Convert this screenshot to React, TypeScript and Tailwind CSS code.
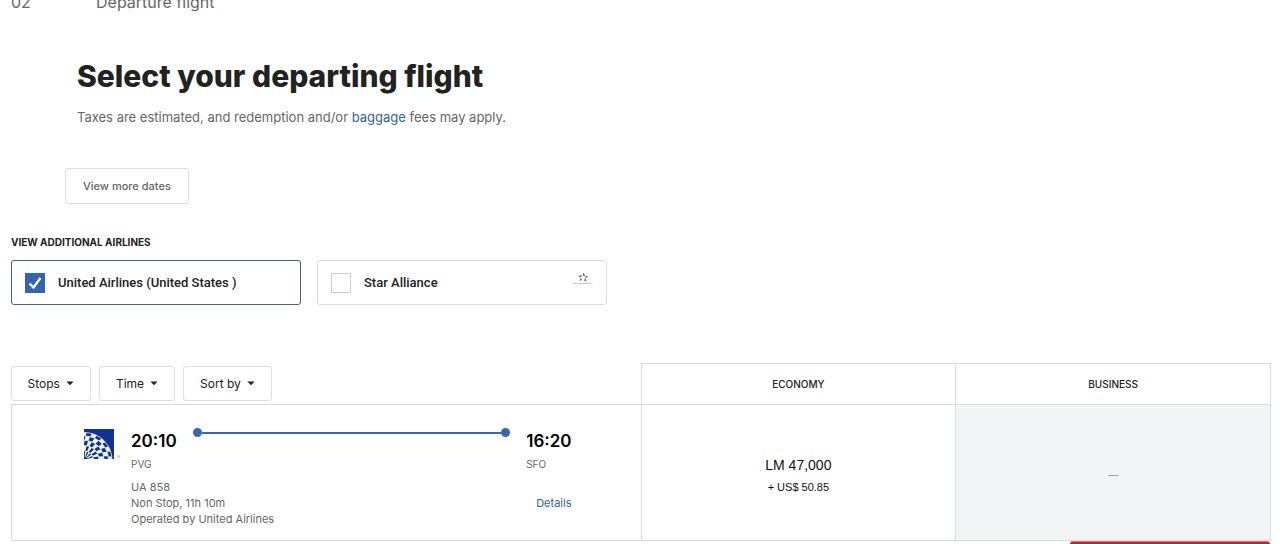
import { useState } from "react";

const filters = ["Stops", "Time", "Sort by"];

function Caret() {
  return (
    <svg viewBox="0 0 8 5" className="h-[5px] w-2" aria-hidden="true">
      <path d="M0.4 0.5h7.2L4 4.3z" fill="#222" />
    </svg>
  );
}

// Radii of the globe's rings and the number of tiles along each quarter turn.
const rings = [3, 9, 14.5, 19.5, 24, 27.5];
const sectors = 8;

function globePoint(radius: number, step: number) {
  const angle = (step / sectors) * (Math.PI / 2) + radius * 0.01;
  return `${(0.5 + radius * Math.sin(angle)).toFixed(2)} ${(31 - radius * Math.cos(angle)).toFixed(2)}`;
}

const globeTiles = rings.slice(0, -1).flatMap((inner, i) =>
  Array.from({ length: sectors + 3 }, (_, j) => j - 2)
    .filter((j) => (i + j) % 2 === 0)
    .map((j) => {
      const outer = rings[i + 1];
      return `M${globePoint(inner, j)}L${globePoint(outer, j)}L${globePoint(outer, j + 1)}L${globePoint(inner, j + 1)}z`;
    }),
);

function GlobeLogo() {
  return (
    <svg viewBox="0 0 36 30" className="h-[30px] w-9" role="img" aria-label="United">
      <defs>
        <clipPath id="logo-tile">
          <rect width="30" height="30" />
        </clipPath>
      </defs>
      <rect width="30" height="30" fill="#12348f" />
      <g clipPath="url(#logo-tile)">
        <path d={globeTiles.join("")} fill="#f4f8fd" />
        <g fill="none" stroke="#dfe8f6" strokeWidth="0.8">
          {rings.slice(1).map((radius) => (
            <circle key={radius} cx="0.5" cy="31" r={radius} />
          ))}
        </g>
      </g>
      <circle cx="34.5" cy="27.5" r="1" fill="none" stroke="#7f9ccc" strokeWidth="0.6" />
    </svg>
  );
}

function StarAllianceLogo() {
  return (
    <svg viewBox="0 0 20 14" className="h-[14px] w-5" role="img" aria-label="Star Alliance">
      <g fill="#6b6b6b">
        <path d="M10.6 0.6l1.7 3.7-2.9-.7z" />
        <path d="M15.3 3.8l-2.7 3-.7-2.4z" />
        <path d="M13.6 9.8l-3.3-1.9 2.3-1.1z" />
        <path d="M6.8 9.6l.4-3.7 1.8 1.7z" />
        <path d="M5 3.8l4-.6-1.4 2.3z" />
      </g>
      <path d="M0.5 11.5h19" stroke="#bbb" strokeWidth="1" strokeDasharray="2.4 .6" />
    </svg>
  );
}

type AirlineProps = {
  label: string;
  checked: boolean;
  onChange: (value: boolean) => void;
  logo?: boolean;
};

function AirlineOption({ label, checked, onChange, logo }: AirlineProps) {
  return (
    <label
      className={
        "flex h-[45px] w-[290px] items-center rounded-[3px] border px-[13px] font-['Roboto','Liberation_Sans',sans-serif] text-[13px] font-medium text-[#222] " +
        (checked ? "border-[#3f6486]" : "border-[#dcdcdc]")
      }
    >
      <span className="grid">
        <input
          type="checkbox"
          checked={checked}
          onChange={(e) => onChange(e.target.checked)}
          className="col-start-1 row-start-1 size-5 appearance-none border border-[#cccccc] bg-white checked:border-[#3563b0] checked:bg-[#3563b0]"
        />
        {checked && (
          <svg viewBox="0 0 20 20" className="pointer-events-none col-start-1 row-start-1 size-5" aria-hidden="true">
            <path d="M4.5 10.5l4 4L15.5 5" fill="none" stroke="#fff" strokeWidth="2.4" />
          </svg>
        )}
      </span>
      <span className="ml-[13px]">{label}</span>
      {logo && (
        <span className="mb-2 ml-auto">
          <StarAllianceLogo />
        </span>
      )}
    </label>
  );
}

export default function App() {
  const [united, setUnited] = useState(true);
  const [star, setStar] = useState(false);

  return (
    <div className="h-screen overflow-hidden bg-white font-['Inter','Liberation_Sans',sans-serif] text-[#222]">
      <main className="pr-[9px] pl-[11px]">
        <div className="-mt-[10px] flex h-6 items-center text-[16px] text-[#666]">
          <span className="w-[85px]">02</span>
          <span>Departure flight</span>
        </div>

        <header className="mt-[42px] ml-[66px]">
          <h1 className="text-[30px] leading-10 font-extrabold">Select your departing flight</h1>
          <p className="mt-[11px] text-[13px] leading-5 text-[#666]">
            Taxes are estimated, and redemption and/or{" "}
            <a href="#baggage" className="text-[#2f649c]">baggage</a> fees may apply.
          </p>
        </header>

        <button type="button" className="mt-[41px] ml-[54px] block h-9 rounded-[3px] border border-[#dedede] px-[17px] text-[11px] font-medium text-[#666]">
          View more dates
        </button>

        <fieldset className="mt-[30px]">
          <legend className="text-[10px] leading-4 font-bold">VIEW ADDITIONAL AIRLINES</legend>
          <div className="mt-[10px] flex gap-4">
            <AirlineOption label="United Airlines (United States )" checked={united} onChange={setUnited} />
            <AirlineOption label="Star Alliance" checked={star} onChange={setStar} logo />
          </div>
        </fieldset>

        <table className="mt-[58px] w-full table-fixed border-collapse">
          <thead>
            <tr className="h-[41px]">
              <td className="w-1/2 p-0 align-middle">
                <div className="-ml-px flex gap-2">
                  {filters.map((name) => (
                    <button key={name} type="button" className="flex h-[35px] items-center gap-[6px] rounded-[3px] border border-[#dedede] px-4 text-[12px]">
                      {name}
                      <Caret />
                    </button>
                  ))}
                </div>
              </td>
              <th scope="col" className="w-1/4 border border-[#d9dcdd] text-[10px] font-medium">ECONOMY</th>
              <th scope="col" className="w-1/4 border border-[#d9dcdd] text-[10px] font-medium">BUSINESS</th>
            </tr>
          </thead>
          <tbody>
            <tr className="h-[136px]">
              <td className="border border-[#d9dcdd] py-0 pr-[69px] pl-[72px] align-top">
                <div className="flex pt-6">
                  <GlobeLogo />
                  <div className="ml-[11px] flex-1">
                    <div className="flex">
                      <div className="w-[62px]">
                        <p className="text-[17px] leading-6 font-semibold text-black">20:10</p>
                        <p className="mt-[3px] text-[10px] leading-4 text-[#666]">PVG</p>
                      </div>
                      <div className="mt-[-1px] flex h-[9px] flex-1 items-center">
                        <span className="size-[9px] rounded-full bg-[#3a66ad]" />
                        <span className="h-[2px] flex-1 bg-[#3a66ad]" />
                        <span className="size-[9px] rounded-full bg-[#3a66ad]" />
                      </div>
                      <div className="ml-4">
                        <p className="text-[17px] leading-6 font-semibold text-black">16:20</p>
                        <p className="mt-[3px] text-[10px] leading-4 text-[#666]">SFO</p>
                      </div>
                    </div>
                    <div className="mt-[7px] flex items-center justify-between text-[11px] leading-4 text-[#666]">
                      <p>
                        UA 858
                        <br />
                        Non Stop, 11h 10m
                        <br />
                        Operated by United Airlines
                      </p>
                      <a href="#details" className="text-[#2f649c]">Details</a>
                    </div>
                  </div>
                </div>
              </td>
              <td className="border border-[#d9dcdd] pt-1 text-center font-['Liberation_Sans',sans-serif] text-[#111]">
                <p className="text-[14px] leading-6">LM 47,000</p>
                <p className="text-[11px] leading-5">+ US$ 50.85</p>
              </td>
              <td className="border border-[#d9dcdd] bg-[#f2f4f6] pt-[5px] text-center text-[10px] text-[#888]">—</td>
            </tr>
          </tbody>
        </table>
      </main>

      <button type="button" aria-label="Open support panel" className="fixed right-[10px] bottom-0 h-[3px] w-[200px] rounded-t-[3px] border-t border-[#d9797d] bg-[#ab2b31]" />
    </div>
  );
}
